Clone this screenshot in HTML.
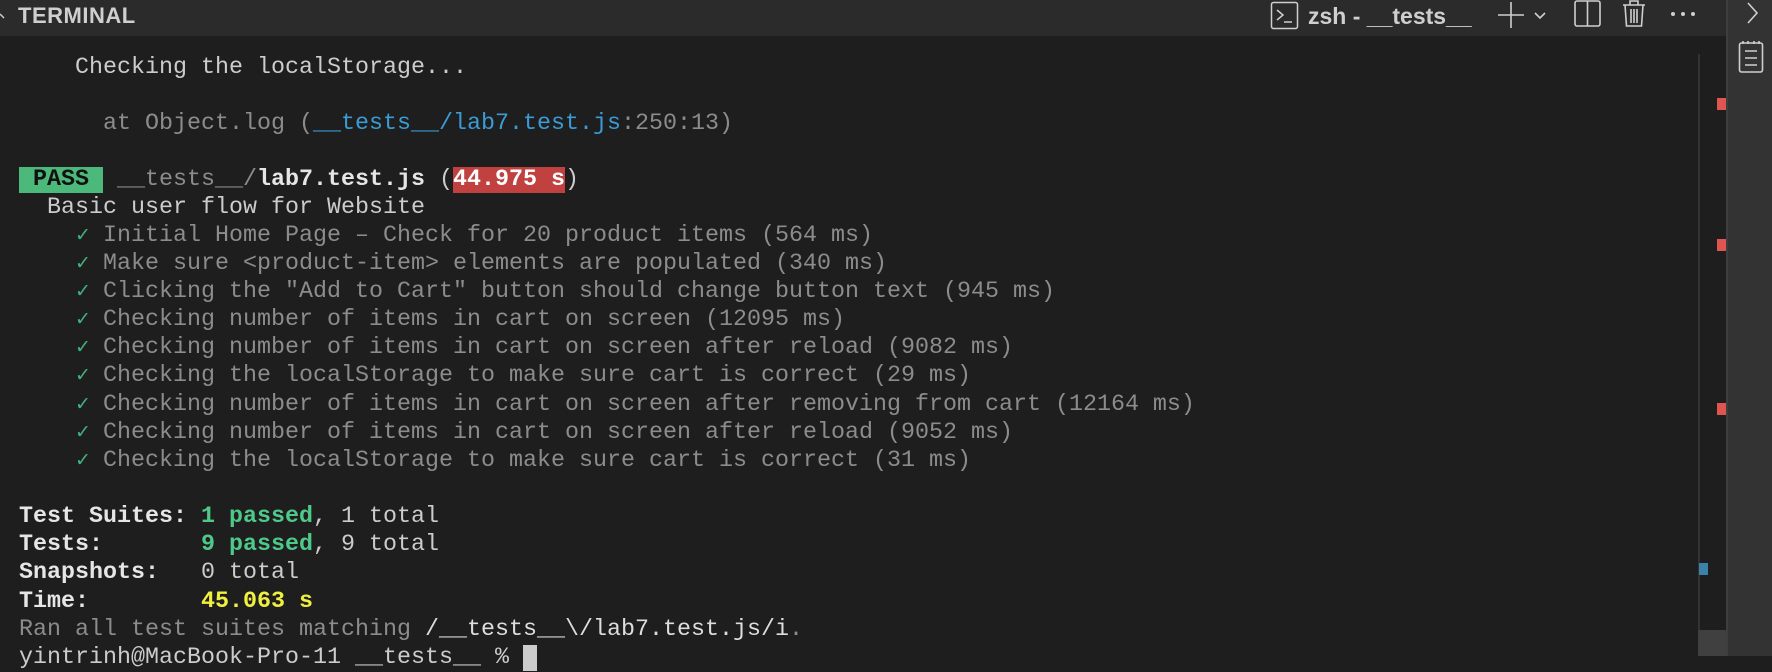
<!DOCTYPE html>
<html><head><meta charset="utf-8"><style>
html,body{margin:0;padding:0;width:1772px;height:656px;overflow:hidden;background:#1e1e1e;}
.hdr{position:absolute;left:0;top:0;width:1726px;height:36px;background:#2b2b2b;}
.ttl{position:absolute;left:18px;top:3px;font:bold 22px "Liberation Sans",sans-serif;color:#cfcfcf;letter-spacing:0.5px}
.zsh{position:absolute;left:1308px;top:3px;font:bold 23px "Liberation Sans",sans-serif;color:#cfcfcf}
.rp{position:absolute;left:1726px;top:0;width:46px;height:656px;background:#333;border-left:2px solid #3e3e3e;box-sizing:border-box}
.t{position:absolute;left:19px;font:23.33px/28px "Liberation Mono",monospace;color:#cccccc;white-space:pre}
.g{color:#8c8c8c}.ok{color:#3fb37f;font-size:19px;display:inline-block;width:14px}.b{font-weight:bold;color:#e6e6e6}
.pass{background:#4cb97a;color:#111;font-weight:bold}
.red{background:#c0413f;color:#fff;font-weight:bold}
.lnk{color:#3a9bd5}.grn{color:#4ec98a;font-weight:bold}.yel{color:#f0f040;font-weight:bold}
</style></head><body>
<div class="hdr"></div>
<svg style="position:absolute;left:0;top:12px" width="6" height="10" viewBox="0 0 6 10" fill="none" stroke="#cfcfcf" stroke-width="1.5"><path d="M0 2l4 4"/></svg>
<div class="ttl">TERMINAL</div>
<svg style="position:absolute;left:1270px;top:1px" width="30" height="30" viewBox="0 0 30 30" fill="none" stroke="#cfcfcf" stroke-width="1.5"><rect x="1.5" y="1.5" width="26" height="26" rx="2"/><path d="M7 9l6 5-6 5M14 21h8"/></svg>
<div class="zsh">zsh - __tests__</div>
<svg style="position:absolute;left:1498px;top:2px" width="60" height="26" viewBox="0 0 60 26" fill="none" stroke="#cfcfcf" stroke-width="1.6"><path d="M13 0v26M0 13h26"/><path d="M37 11l5 5 5-5"/></svg>
<svg style="position:absolute;left:1574px;top:0" width="28" height="28" viewBox="0 0 28 28" fill="none" stroke="#cfcfcf" stroke-width="1.6"><rect x="1" y="1" width="25" height="25" rx="2"/><path d="M13.5 1v25"/></svg>
<svg style="position:absolute;left:1622px;top:0" width="24" height="28" viewBox="0 0 24 28" fill="none" stroke="#cfcfcf" stroke-width="1.6"><path d="M1 5h22M8 5V1h8v4M3 5l1.5 21h15L21 5M9 9v14M12 9v14M15 9v14"/></svg>
<svg style="position:absolute;left:1669px;top:10px" width="28" height="8"><circle cx="4" cy="4" r="2" fill="#cfcfcf"/><circle cx="14" cy="4" r="2" fill="#cfcfcf"/><circle cx="24" cy="4" r="2" fill="#cfcfcf"/></svg>
<div class="rp"></div>
<svg style="position:absolute;left:1747px;top:2px" width="12" height="22" viewBox="0 0 12 22" fill="none" stroke="#cfcfcf" stroke-width="1.6"><path d="M1 1l9 10-9 10"/></svg>
<svg style="position:absolute;left:1738px;top:40px" width="26" height="33" viewBox="0 0 26 33" fill="none" stroke="#cfcfcf" stroke-width="1.6"><rect x="1.5" y="3" width="23" height="29" rx="2"/><path d="M5 1v3M10 1v3M16 1v3M21 1v3M7 11h12M7 18h12M7 25h12"/></svg>
<div style="position:absolute;left:1698px;top:54px;width:2px;height:602px;background:#333"></div>
<div style="position:absolute;left:1717px;top:98px;width:9px;height:12px;background:#e05550"></div>
<div style="position:absolute;left:1717px;top:239px;width:9px;height:12px;background:#e05550"></div>
<div style="position:absolute;left:1717px;top:403px;width:9px;height:12px;background:#e05550"></div>
<div style="position:absolute;left:1699px;top:563px;width:9px;height:12px;background:#3a82aa"></div>
<div style="position:absolute;left:1698px;top:630px;width:28px;height:26px;background:#404040"></div>

<div class="t" style="top:54px">    Checking the localStorage...</div>
<div class="t g" style="top:110px">      at Object.log (<span class="lnk">__tests__/lab7.test.js</span>:250:13)</div>
<div class="t" style="top:166px"><span class="pass"> PASS </span> <span class="g">__tests__/</span><span class="b">lab7.test.js</span> (<span class="red">44.975 s</span>)</div>
<div class="t" style="top:194px">  Basic user flow for Website</div>
<div class="t g" style="top:222px">    <span class="ok">✓</span> Initial Home Page – Check for 20 product items (564 ms)</div>
<div class="t g" style="top:250px">    <span class="ok">✓</span> Make sure &lt;product-item&gt; elements are populated (340 ms)</div>
<div class="t g" style="top:278px">    <span class="ok">✓</span> Clicking the "Add to Cart" button should change button text (945 ms)</div>
<div class="t g" style="top:306px">    <span class="ok">✓</span> Checking number of items in cart on screen (12095 ms)</div>
<div class="t g" style="top:334px">    <span class="ok">✓</span> Checking number of items in cart on screen after reload (9082 ms)</div>
<div class="t g" style="top:362px">    <span class="ok">✓</span> Checking the localStorage to make sure cart is correct (29 ms)</div>
<div class="t g" style="top:391px">    <span class="ok">✓</span> Checking number of items in cart on screen after removing from cart (12164 ms)</div>
<div class="t g" style="top:419px">    <span class="ok">✓</span> Checking number of items in cart on screen after reload (9052 ms)</div>
<div class="t g" style="top:447px">    <span class="ok">✓</span> Checking the localStorage to make sure cart is correct (31 ms)</div>
<div class="t" style="top:503px"><span class="b">Test Suites: </span><span class="grn">1 passed</span>, 1 total</div>
<div class="t" style="top:531px"><span class="b">Tests:       </span><span class="grn">9 passed</span>, 9 total</div>
<div class="t" style="top:559px"><span class="b">Snapshots:   </span>0 total</div>
<div class="t" style="top:588px"><span class="b">Time:        </span><span class="yel">45.063 s</span></div>
<div class="t g" style="top:616px">Ran all test suites matching <span style="color:#ddd">/__tests__\/lab7.test.js/i</span>.</div>
<div class="t" style="top:644px">yintrinh@MacBook-Pro-11 __tests__ % <span style="background:#ccc"> </span></div>
</body></html>
